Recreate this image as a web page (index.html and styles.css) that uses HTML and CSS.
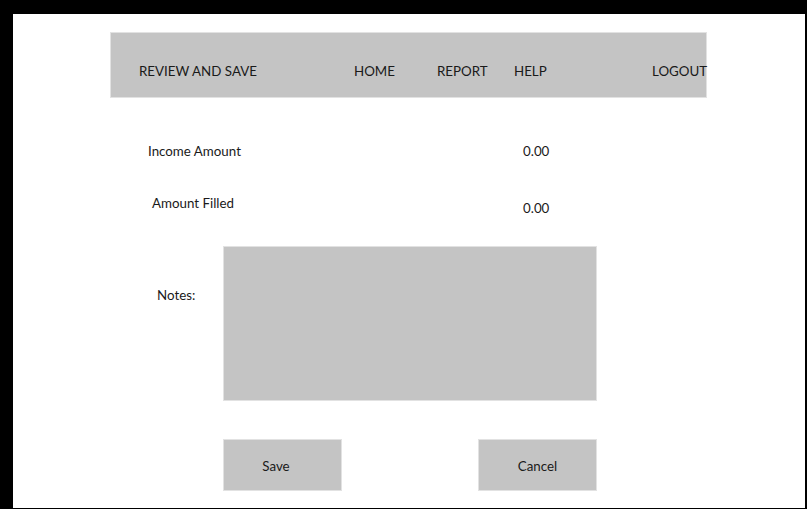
FILE: index.html
```html
<!DOCTYPE html>
<html>
<head>
<meta charset="utf-8">
<link rel="stylesheet" href="styles.css">
</head>
<body>
<div class="page">
  <header class="topbar">
    <span class="nav-title">REVIEW AND SAVE</span>
    <span class="nav-item home">HOME</span>
    <span class="nav-item report">REPORT</span>
    <span class="nav-item help">HELP</span>
    <span class="nav-item logout">LOGOUT</span>
  </header>
  <section class="row row-income">
    <span class="label label-income">Income Amount</span>
    <span class="value">0.00</span>
  </section>
  <section class="row row-filled">
    <span class="label label-filled">Amount Filled</span>
    <span class="value value-filled">0.00</span>
  </section>
  <section class="notes-row">
    <span class="label label-notes">Notes:</span>
    <div class="notes-box"></div>
  </section>
  <section class="actions">
    <div class="btn btn-save">Save</div>
    <div class="btn btn-cancel">Cancel</div>
  </section>
</div>
</body>
</html>
```

FILE: styles.css
```css
html, body {
  margin: 0;
  padding: 0;
  background: #ffffff;
}
body {
  font-family: Lato, "Liberation Sans", sans-serif;
  font-size: 13.33px;
  line-height: 17px;
  color: #1a1a1a;
}
.page {
  box-sizing: border-box;
  width: 807px;
  height: 509px;
  border-style: solid;
  border-color: #000000;
  border-width: 14px 2px 1px 13px;
  background: #ffffff;
}
.topbar {
  box-sizing: border-box;
  margin: 18px 0 0 97px;
  width: 597px;
  height: 66px;
  background: #c4c4c4;
  border: 1px solid #e2e2e2;
  display: flex;
  align-items: flex-start;
  padding-top: 30px;
  white-space: nowrap;
}
.nav-item { flex: none; }
.nav-title { margin-left: 28px; width: 215px; flex: none; }
.home { width: 83px; }
.report { width: 77px; }
.help { width: 138px; }
.row {
  display: flex;
  align-items: flex-start;
}
.row-income { margin-top: 45px; }
.row-filled { margin-top: 35px; }
.label-income { margin-left: 135px; width: 375px; }
.label-filled { margin-left: 139px; width: 371px; }
.value-filled { padding-top: 5px; }
.notes-row {
  display: flex;
  align-items: flex-start;
  margin-top: 29px;
}
.label-notes {
  margin-left: 144px;
  width: 66px;
  margin-top: 41px;
}
.notes-box {
  box-sizing: border-box;
  width: 374px;
  height: 155px;
  background: #c4c4c4;
  border: 1px solid #e2e2e2;
}
.actions {
  display: flex;
  margin: 38px 0 0 210px;
  gap: 136px;
}
.btn {
  box-sizing: border-box;
  width: 119px;
  height: 52px;
  background: #c4c4c4;
  border: 1px solid #e2e2e2;
  display: flex;
  align-items: center;
  justify-content: center;
  padding-top: 2px;
}
.btn-save {
  padding-right: 13px;
}
```
